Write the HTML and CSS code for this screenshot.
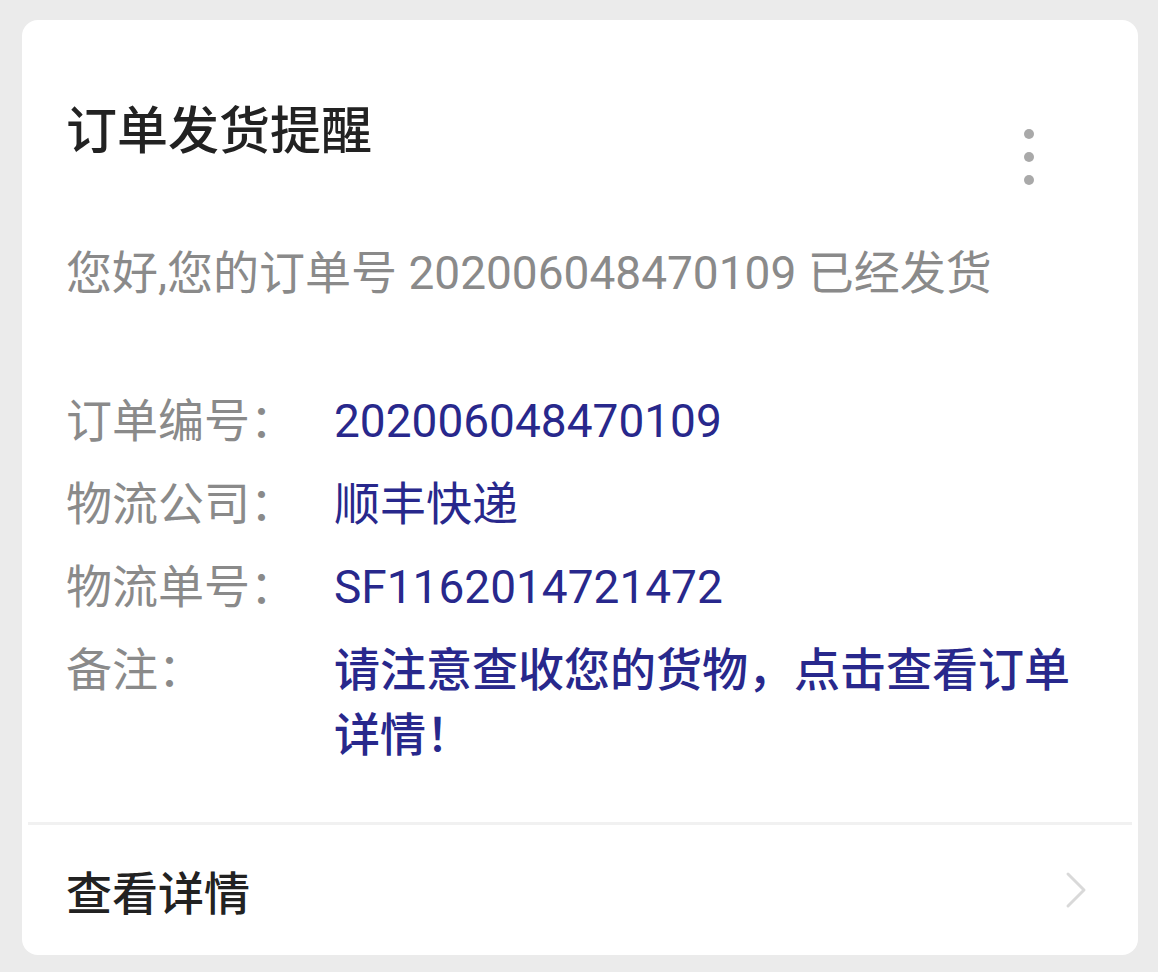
FILE: index.html
```html
<!DOCTYPE html>
<html lang="zh-CN">
<head>
    <meta charset="UTF-8">
    <meta name="viewport" content="width=device-width, initial-scale=1.0">
    <title>订单发货提醒</title>
    <link rel="stylesheet" href="styles.css">
</head>
<body>
    <div class="notice-card">
        <div class="notice-header">
            <h1 class="notice-title">订单发货提醒</h1>
            <div class="more-btn">
                <span class="dot"></span>
                <span class="dot"></span>
                <span class="dot"></span>
            </div>
        </div>
        <p class="notice-desc">您好,您的订单号 202006048470109 已经发货</p>
        <div class="info-list">
            <div class="info-row">
                <span class="info-label">订单编号：</span>
                <span class="info-value">202006048470109</span>
            </div>
            <div class="info-row">
                <span class="info-label">物流公司：</span>
                <span class="info-value">顺丰快递</span>
            </div>
            <div class="info-row">
                <span class="info-label">物流单号：</span>
                <span class="info-value">SF1162014721472</span>
            </div>
            <div class="info-row">
                <span class="info-label">备注：</span>
                <span class="info-value remark">请注意查收您的货物，点击查看订单详情！</span>
            </div>
        </div>
        <div class="divider"></div>
        <div class="notice-footer">
            <span class="footer-text">查看详情</span>
            <svg class="chevron" width="22" height="38" viewBox="0 0 22 38">
                <path d="M3 3 L19 19 L3 35" fill="none" stroke="#d9d9d9" stroke-width="3" stroke-linecap="round" stroke-linejoin="round"/>
            </svg>
        </div>
    </div>
</body>
</html>
```

FILE: styles.css
```css
* { margin: 0; padding: 0; box-sizing: border-box; }
body {
    font-family: Roboto, "Noto Sans CJK SC", sans-serif;
    background: #ebebeb;
    padding: 20px 20px 17px 22px;
}
.notice-card {
    background: #fff;
    border-radius: 16px;
    height: 935px;
    display: flex;
    flex-direction: column;
}
.notice-header {
    display: flex;
    justify-content: space-between;
    align-items: flex-start;
    height: 142px;
    padding: 82px 104px 0 44px;
}
.notice-title {
    font-size: 51px;
    line-height: 60px;
    font-weight: 500;
    color: #222;
}
.more-btn {
    display: flex;
    flex-direction: column;
    gap: 13px;
    padding-top: 27px;
}
.dot {
    width: 10px;
    height: 10px;
    border-radius: 50%;
    background: #a9a9a9;
}
.notice-desc {
    font-size: 46px;
    line-height: 60px;
    color: #8a8a8a;
    margin: 81px 44px 0;
}
.info-list {
    display: flex;
    flex-direction: column;
    gap: 18px;
    margin: 86px 44px 0;
}
.info-row { display: flex; font-size: 46px; line-height: 65px; }
.info-label { width: 268px; flex-shrink: 0; color: #8a8a8a; }
.info-value { color: #28288c; }
.remark { font-weight: 500; }
.divider {
    height: 3px;
    background: #f1f1f1;
    margin: 54px 6px 0;
}
.notice-footer {
    flex: 1;
    display: flex;
    justify-content: space-between;
    align-items: center;
    padding: 0 51px 0 44px;
}
.footer-text {
    font-size: 46px;
    font-weight: 500;
    color: #222;
}
```
